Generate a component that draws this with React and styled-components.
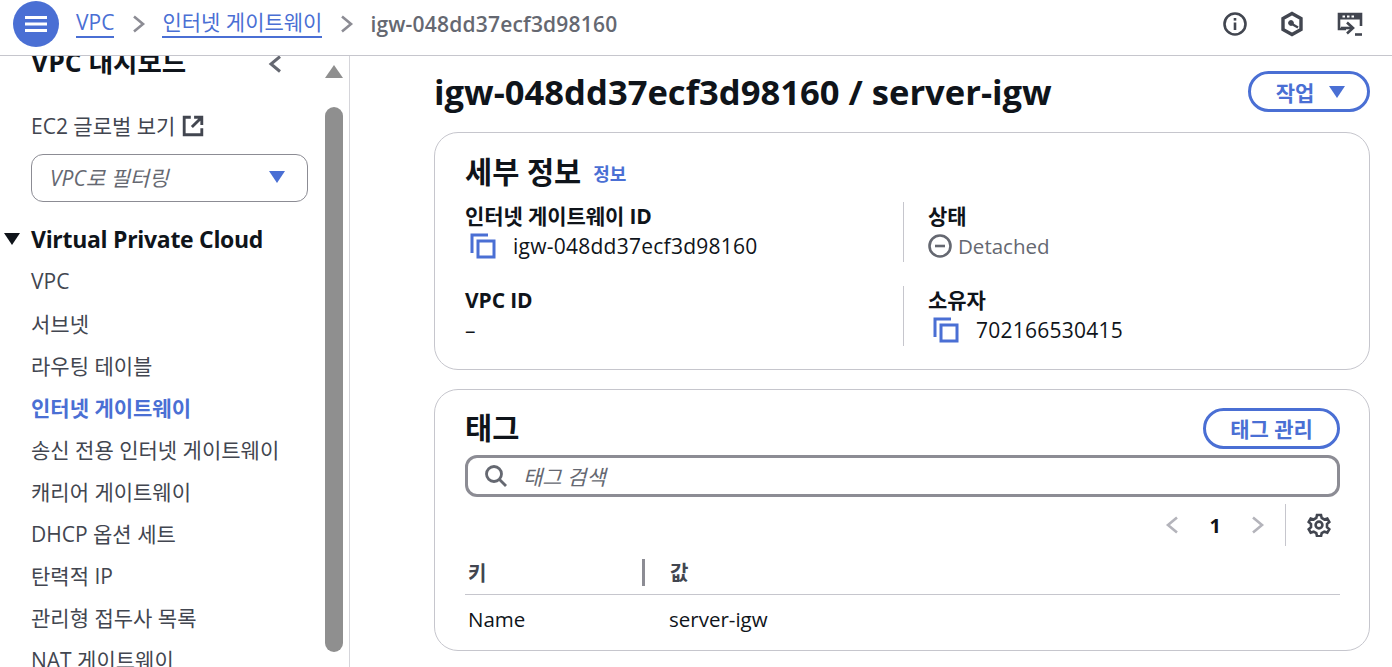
import React from 'react'
import styled, { createGlobalStyle } from 'styled-components'

const FONT = `"Open Sans", "Noto Sans CJK KR", sans-serif`
const BLUE = '#4a6fd4'
const INK = '#0f141a'
const BODY = '#424650'

const Global = createGlobalStyle`
  html, body { margin: 0; height: 100%; overflow: hidden; background: #fff; }
  body { font-family: ${FONT}; color: ${INK}; }
  * { box-sizing: border-box; }
`

const Page = styled.div`
  width: 1392px;
  height: 667px;
  display: flex;
  flex-direction: column;
  overflow: hidden;
`

const Header = styled.header`
  height: 56px;
  flex: none;
  display: flex;
  align-items: center;
  padding: 0 29px 8px 13px;
  border-bottom: 1px solid #c6c6cd;
  background: #fff;
`

const MenuButton = styled.button`
  width: 46px;
  height: 46px;
  border: none;
  border-radius: 50%;
  background: ${BLUE};
  padding: 0;
  margin-right: 17px;
  display: flex;
  align-items: center;
  justify-content: center;
`

const Crumb = styled.a`
  font-size: 21px;
  line-height: 27px;
  color: ${BLUE};
  border-bottom: 2px solid ${BLUE};
`

const CrumbCurrent = styled.span`
  font-size: 21px;
  font-weight: 600;
  color: #656871;
  letter-spacing: 0.2px;
`

const CrumbSep = styled.svg`
  width: 14px;
  height: 18px;
  margin: 0 16px 0 18px;
`

const HeaderIcons = styled.div`
  margin-left: auto;
  display: flex;
  align-items: center;
  gap: 33px;
`

const Body = styled.div`
  flex: 1;
  min-height: 0;
  display: flex;
`

const Sidebar = styled.aside`
  width: 350px;
  flex: none;
  border-right: 1px solid #d5d5da;
  display: flex;
  overflow: hidden;
`

const NavColumn = styled.nav`
  flex: 1;
  min-width: 0;
  margin-top: -8px;
`

const NavTitleRow = styled.div`
  height: 32px;
  display: flex;
  align-items: center;
  justify-content: space-between;
  padding: 0 43px 0 31px;
`

const NavTitle = styled.div`
  font-size: 26.5px;
  font-weight: 700;
  margin-top: -7px;
`

const GlobalLink = styled.div`
  margin: 32px 0 0 31px;
  font-size: 21px;
  line-height: 28px;
  color: ${BODY};
  display: flex;
  align-items: center;
  gap: 7px;
`

const FilterBox = styled.div`
  width: 277px;
  height: 48px;
  margin: 14px 0 0 31px;
  border: 1px solid #8c8c94;
  border-radius: 12px;
  display: flex;
  align-items: center;
  justify-content: space-between;
  padding: 0 22px 3px 18px;
  font-size: 21px;
  font-style: italic;
  color: #656871;
`

const SectionRow = styled.div`
  margin-top: 22px;
  padding-left: 4px;
  display: flex;
  align-items: center;
  gap: 11px;
  font-size: 23px;
  line-height: 30px;
  font-weight: 700;
  letter-spacing: -0.3px;
`

const NavList = styled.ul`
  list-style: none;
  margin: 6px 0 0;
  padding: 0 0 0 31px;
`

const NavItem = styled.li`
  height: 42px;
  display: flex;
  align-items: center;
  font-size: 21px;
  white-space: nowrap;
  color: ${p => (p.$active ? BLUE : BODY)};
  font-weight: ${p => (p.$active ? 700 : 400)};
`

const ScrollTrack = styled.div`
  width: 18px;
  margin-right: 6px;
  flex: none;
  display: flex;
  flex-direction: column;
  align-items: center;
`

const ScrollArrow = styled.div`
  margin-top: 9px;
  width: 0;
  height: 0;
  border-left: 9px solid transparent;
  border-right: 9px solid transparent;
  border-bottom: 13px solid #8f8f8f;
`

const ScrollThumb = styled.div`
  width: 18px;
  height: 545px;
  margin-top: 29px;
  border-radius: 9px;
  background: #8f8f8f;
`

const Main = styled.main`
  flex: 1;
  min-width: 0;
  padding: 15px 22px 0 84px;
  display: flex;
  flex-direction: column;
`

const TitleRow = styled.div`
  height: 41px;
  display: flex;
  align-items: center;
  justify-content: space-between;
`

const PageTitle = styled.h1`
  margin: 0;
  font-size: 34.6px;
  font-weight: 700;
  white-space: nowrap;
`

const PillButton = styled.button`
  height: ${p => p.$h}px;
  width: ${p => p.$w}px;
  border: 3px solid ${BLUE};
  border-radius: 22px;
  background: #fff;
  color: ${BLUE};
  font-family: ${FONT};
  font-size: 21px;
  font-weight: 700;
  padding: 0 0 0 ${p => p.$shift || 0}px;
  display: flex;
  align-items: center;
  justify-content: center;
  gap: 15px;
`

const Card = styled.section`
  border: 1px solid #c6c6cd;
  border-radius: 24px;
  background: #fff;
  padding: 17px 29px 0 30px;
  height: ${p => p.$h}px;
  margin-top: ${p => p.$top}px;
`

const CardHead = styled.div`
  display: flex;
  align-items: center;
  height: ${p => p.$h || 40}px;
`

const CardTitle = styled.h2`
  margin: 0;
  font-size: 29.5px;
  font-weight: 700;
`

const InfoLink = styled.a`
  margin: 5px 0 0 12px;
  font-size: 18px;
  font-weight: 600;
  color: ${BLUE};
`

const DetailGrid = styled.div`
  display: grid;
  grid-template-columns: 438px 1fr;
  row-gap: 24px;
  margin-top: 12px;
`

const DetailCell = styled.div`
  height: 60px;
  ${p => p.$split && `
    border-left: 1px solid #c6c6cd;
    padding-left: 24px;
  `}
`

const DetailLabel = styled.div`
  font-size: 21px;
  line-height: 27px;
  font-weight: 700;
  letter-spacing: -0.1px;
  padding-top: 1px;
`

const DetailValue = styled.div`
  margin-top: 1px;
  height: 30px;
  display: flex;
  align-items: center;
  font-size: ${p => (p.$muted ? '20.5px' : '21px')};
  letter-spacing: ${p => (p.$muted ? '0' : '0.25px')};
  color: ${p => (p.$muted ? '#656871' : INK)};
`

const CopyWrap = styled.span`
  display: flex;
  margin: 0 17px 0 5px;
`

const StatusIcon = styled.svg`
  margin-right: 6px;
`

const TagHead = styled(CardHead)`
  justify-content: space-between;
  margin-top: 1px;
`

const TagTitle = styled(CardTitle)`
  margin-top: -3px;
`

const SearchBox = styled.div`
  height: 42px;
  margin-top: 7px;
  border: 3px solid #8c8c94;
  border-radius: 12px;
  display: flex;
  align-items: center;
  padding-left: 16px;
  gap: 15px;
  font-size: 21px;
  font-style: italic;
  color: #656871;
`

const Pager = styled.div`
  height: 42px;
  margin-top: 7px;
  padding-right: 9px;
  display: flex;
  align-items: center;
  justify-content: flex-end;
`

const PageNumber = styled.span`
  font-size: 20px;
  font-weight: 700;
  margin: 0 30px 0 31px;
`

const PagerRule = styled.span`
  width: 1px;
  height: 42px;
  background: #c6c6cd;
  margin: 0 21px 0 20px;
`

const TableHead = styled.div`
  display: grid;
  grid-template-columns: 177px 1fr;
  height: 45px;
  margin-top: 4px;
  align-items: center;
  border-bottom: 1px solid #c6c6cd;
`

const HeadCell = styled.div`
  font-size: 20px;
  font-weight: 700;
  color: ${BODY};
  padding-left: 3px;
  ${p => p.$divided && `
    border-left: 3px solid #8c8c94;
    line-height: 27px;
    padding-left: 25px;
  `}
`

const TableRow = styled.div`
  display: grid;
  grid-template-columns: 177px 1fr;
  height: 47px;
  align-items: center;
  font-size: 20.5px;
`

const KeyCell = styled.div`
  padding-left: 3px;
`

const ValueCell = styled.div`
  padding-left: 27px;
`

const CopyIcon = () => (
  <svg width="26" height="26" viewBox="0 0 26 26" fill="none" stroke={BLUE} strokeWidth="3">
    <path d="M2 20V2h16" />
    <rect x="8" y="8" width="16" height="16" />
  </svg>
)

const Chevron = ({ dir = 'right', color = '#8c8c94', w = 14, h = 18, sw = 2.6 }) => (
  <svg width={w} height={h} viewBox="0 0 14 18" fill="none" stroke={color} strokeWidth={sw}>
    <path d={dir === 'right' ? 'M2 1.5 11 9l-9 7.5' : 'M12 1.5 3 9l9 7.5'} />
  </svg>
)

const Caret = ({ color = BLUE, w = 16, h = 12 }) => (
  <svg width={w} height={h} viewBox="0 0 16 12">
    <path d="M0 0h16L8 12z" fill={color} />
  </svg>
)

export default function App() {
  return (
    <Page>
      <Global />
      <Header>
        <MenuButton aria-label="menu">
          <svg width="22" height="16" viewBox="0 0 22 16" fill="#fff">
            <rect width="22" height="3" />
            <rect y="6.5" width="22" height="3" />
            <rect y="13" width="22" height="3" />
          </svg>
        </MenuButton>
        <Crumb>VPC</Crumb>
        <CrumbSep viewBox="0 0 14 18" fill="none" stroke="#8c8c94" strokeWidth="2.6">
          <path d="M2 1.5 11 9l-9 7.5" />
        </CrumbSep>
        <Crumb>인터넷 게이트웨이</Crumb>
        <CrumbSep viewBox="0 0 14 18" fill="none" stroke="#8c8c94" strokeWidth="2.6">
          <path d="M2 1.5 11 9l-9 7.5" />
        </CrumbSep>
        <CrumbCurrent>igw-048dd37ecf3d98160</CrumbCurrent>
        <HeaderIcons>
          <svg width="24" height="24" viewBox="0 0 24 24" fill="none" stroke="#424650" strokeWidth="2.6">
            <circle cx="12" cy="12" r="10.5" />
            <path d="M12 10.5V18" />
            <path d="M12 6v2.6" />
          </svg>
          <svg width="24" height="26" viewBox="0 0 24 26" fill="none" stroke="#424650" strokeWidth="3.4">
            <path d="M12 2.5 21 7.5v11l-9 5-9-5v-11z" />
            <circle cx="11" cy="12" r="2.4" fill="#424650" strokeWidth="1" />
            <path d="M12 13l6 3.5" strokeWidth="2.4" />
          </svg>
          <svg width="26" height="24" viewBox="0 0 26 24" fill="none" stroke="#424650" strokeWidth="2.6">
            <path d="M9 17H2V2h22v12" />
            <rect x="2" y="2" width="22" height="5" fill="#424650" strokeWidth="1" />
            <path d="M5.5 4.5h2.5M10 4.5h2.5M14.5 4.5H17" stroke="#fff" strokeWidth="2" />
            <path d="M10 10.5l6 5.5-6 5.5" />
            <path d="M4 16h11" />
            <path d="M18 22.5h7" />
          </svg>
        </HeaderIcons>
      </Header>
      <Body>
        <Sidebar>
          <NavColumn>
            <NavTitleRow>
              <NavTitle>VPC 대시보드</NavTitle>
              <Chevron dir="left" color="#656871" w={14} h={20} sw={3} />
            </NavTitleRow>
            <GlobalLink>
              EC2 글로벌 보기
              <svg width="22" height="22" viewBox="0 0 20 20" fill="none" stroke="#424650" strokeWidth="2.6">
                <path d="M8 2H2v16h16v-6" />
                <path d="M11 2h7v7M18 2 9 11" />
              </svg>
            </GlobalLink>
            <FilterBox>
              VPC로 필터링
              <Caret />
            </FilterBox>
            <SectionRow>
              <Caret color={INK} />
              Virtual Private Cloud
            </SectionRow>
            <NavList>
              <NavItem>VPC</NavItem>
              <NavItem>서브넷</NavItem>
              <NavItem>라우팅 테이블</NavItem>
              <NavItem $active>인터넷 게이트웨이</NavItem>
              <NavItem>송신 전용 인터넷 게이트웨이</NavItem>
              <NavItem>캐리어 게이트웨이</NavItem>
              <NavItem>DHCP 옵션 세트</NavItem>
              <NavItem>탄력적 IP</NavItem>
              <NavItem>관리형 접두사 목록</NavItem>
              <NavItem>NAT 게이트웨이</NavItem>
            </NavList>
          </NavColumn>
          <ScrollTrack>
            <ScrollArrow />
            <ScrollThumb />
          </ScrollTrack>
        </Sidebar>
        <Main>
          <TitleRow>
            <PageTitle>igw-048dd37ecf3d98160 / server-igw</PageTitle>
            <PillButton $w={122} $h={41} $shift={3}>
              작업
              <Caret />
            </PillButton>
          </TitleRow>
          <Card $h={238} $top={20}>
            <CardHead>
              <CardTitle>세부 정보</CardTitle>
              <InfoLink>정보</InfoLink>
            </CardHead>
            <DetailGrid>
              <DetailCell>
                <DetailLabel>인터넷 게이트웨이 ID</DetailLabel>
                <DetailValue>
                  <CopyWrap><CopyIcon /></CopyWrap>
                  igw-048dd37ecf3d98160
                </DetailValue>
              </DetailCell>
              <DetailCell $split>
                <DetailLabel>상태</DetailLabel>
                <DetailValue $muted>
                  <StatusIcon width="24" height="24" viewBox="0 0 24 24" fill="none" stroke="#656871" strokeWidth="2.6">
                    <circle cx="12" cy="12" r="10.5" />
                    <path d="M7 12h10" />
                  </StatusIcon>
                  Detached
                </DetailValue>
              </DetailCell>
              <DetailCell>
                <DetailLabel>VPC ID</DetailLabel>
                <DetailValue>–</DetailValue>
              </DetailCell>
              <DetailCell $split>
                <DetailLabel>소유자</DetailLabel>
                <DetailValue>
                  <CopyWrap><CopyIcon /></CopyWrap>
                  702166530415
                </DetailValue>
              </DetailCell>
            </DetailGrid>
          </Card>
          <Card $h={262} $top={19}>
            <TagHead>
              <TagTitle>태그</TagTitle>
              <PillButton $w={137} $h={41}>태그 관리</PillButton>
            </TagHead>
            <SearchBox>
              <svg width="24" height="24" viewBox="0 0 24 24" fill="none" stroke="#656871" strokeWidth="2.8">
                <circle cx="10" cy="10" r="7.5" />
                <path d="M15.5 15.5 22 22" />
              </svg>
              태그 검색
            </SearchBox>
            <Pager>
              <Chevron dir="left" color="#b4b4bb" />
              <PageNumber>1</PageNumber>
              <Chevron dir="right" color="#b4b4bb" />
              <PagerRule />
              <svg width="24" height="24" viewBox="0 0 24 24" fill="none" stroke="#424650" strokeWidth="2.6">
                <path d="M10 2h4l.7 3 2.6 1.5 3-.9 2 3.4-2.3 2.1v3l2.3 2.1-2 3.4-3-.9-2.6 1.5-.7 3h-4l-.7-3-2.6-1.5-3 .9-2-3.4 2.3-2.1v-3L1.7 9l2-3.4 3 .9L9.3 5z" />
                <circle cx="12" cy="12" r="3.4" />
              </svg>
            </Pager>
            <TableHead>
              <HeadCell>키</HeadCell>
              <HeadCell $divided>값</HeadCell>
            </TableHead>
            <TableRow>
              <KeyCell>Name</KeyCell>
              <ValueCell>server-igw</ValueCell>
            </TableRow>
          </Card>
        </Main>
      </Body>
    </Page>
  )
}
